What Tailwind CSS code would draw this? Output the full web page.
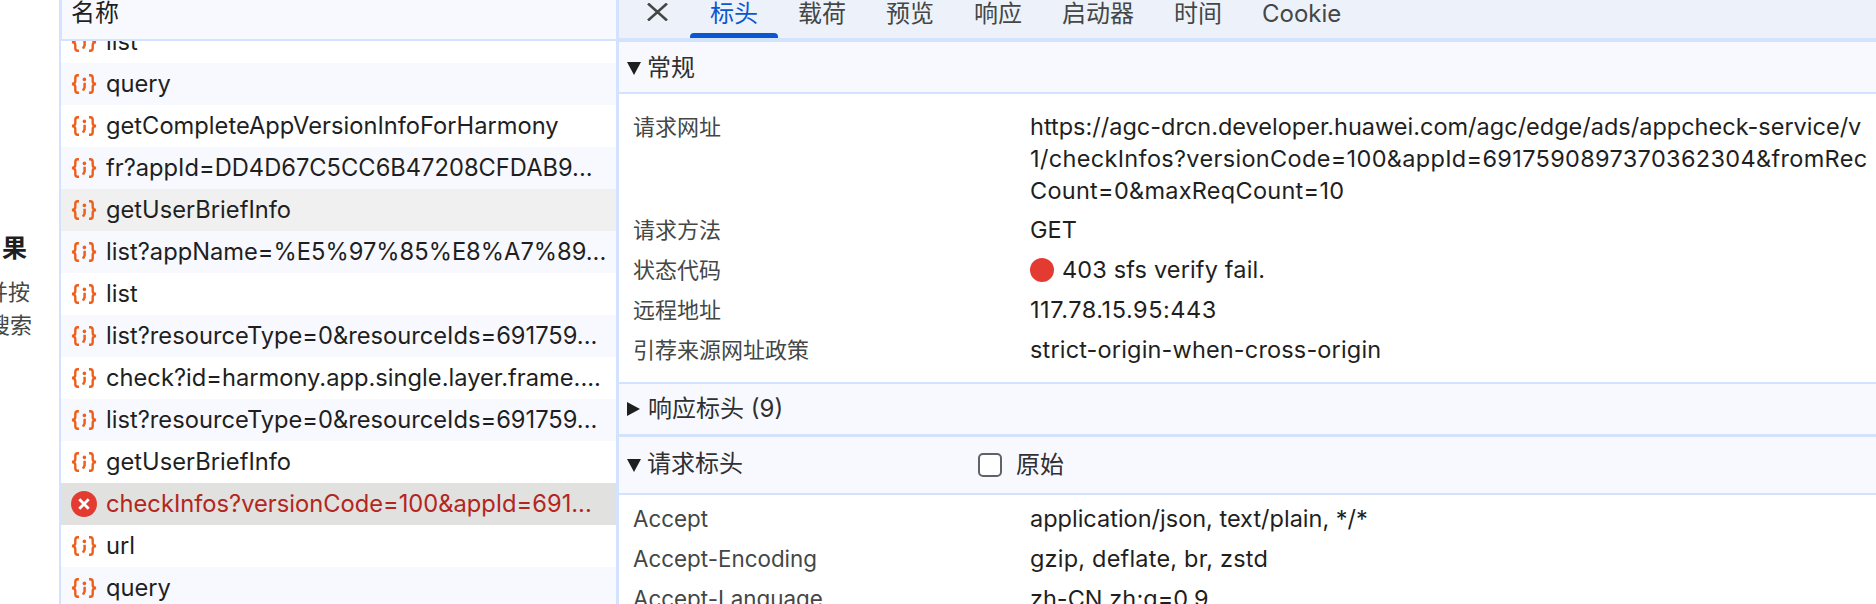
<!DOCTYPE html>
<html lang="zh-CN">
<head>
<meta charset="utf-8">
<script src="https://cdn.jsdelivr.net/npm/@tailwindcss/browser@4"></script>
<title>Network</title>
</head>
<body class="bg-white overflow-hidden">
<svg width="0" height="0" class="absolute">
  <defs>
    <symbol id="j" viewBox="0 0 26 20">
      <path d="M8 1.2H6.6C4.8 1.2 4.3 2.2 4.3 4V7C4.3 8.8 3.4 9.8 1 10C3.4 10.2 4.3 11.2 4.3 13V16C4.3 17.8 4.8 18.8 6.6 18.8H8" fill="none" stroke="#ee5f1b" stroke-width="2.4"/>
      <path d="M18 1.2H19.4C21.2 1.2 21.7 2.2 21.7 4V7C21.7 8.8 22.6 9.8 25 10C22.6 10.2 21.7 11.2 21.7 13V16C21.7 17.8 21.2 18.8 19.4 18.8H18" fill="none" stroke="#ee5f1b" stroke-width="2.4"/>
      <circle cx="13.4" cy="5.4" r="1.8" fill="#ee5f1b"/>
      <path d="M13.6 8.8V13.5L12 16.6" fill="none" stroke="#ee5f1b" stroke-width="2.5"/>
    </symbol>
  </defs>
</svg>
<div class="flex w-[1876px] h-[604px] overflow-hidden relative text-[#1f1f1f] font-['Inter','Noto_Sans_CJK_SC',sans-serif]">
  <!-- clipped left strip -->
  <div class="w-[59px] shrink-0 flex flex-col items-end pt-[233px] text-[22px] text-[#444746] whitespace-nowrap overflow-hidden">
    <div class="h-[36px] leading-[30px] text-[25px] font-bold text-[#1f1f1f] pr-[32px]">果</div>
    <div class="h-[36px] leading-[46px] pr-[29px]">刷新并按</div>
    <div class="h-[35px] leading-[40px] pr-[27px]">开始搜索</div>
  </div>

  <!-- request list -->
  <div class="w-[557px] shrink-0 h-full flex flex-col border-l-2 border-[#d3e3fd] overflow-hidden text-[23.7px]">
    <div class="h-[40.5px] shrink-0 bg-[#f8f9ff] border-b-2 border-l-2 -ml-px border-[#d3e3fd] pl-[9px] text-[24px] leading-[26px] relative z-10">名称</div>
    <div class="-mt-[20px] flex flex-col">
      <div class="h-[42px] flex items-center pl-[10px] gap-[9px] bg-white"><svg class="w-[26px] h-[20px] shrink-0"><use href="#j"/></svg><span>list</span></div>
      <div class="h-[42px] flex items-center pl-[10px] gap-[9px] bg-[#f8f9fe]"><svg class="w-[26px] h-[20px] shrink-0"><use href="#j"/></svg><span>query</span></div>
      <div class="h-[42px] flex items-center pl-[10px] gap-[9px] bg-white"><svg class="w-[26px] h-[20px] shrink-0"><use href="#j"/></svg><span>getCompleteAppVersionInfoForHarmony</span></div>
      <div class="h-[42px] flex items-center pl-[10px] gap-[9px] bg-[#f8f9fe]"><svg class="w-[26px] h-[20px] shrink-0"><use href="#j"/></svg><span>fr?appId=DD4D67C5CC6B47208CFDAB9...</span></div>
      <div class="h-[42px] flex items-center pl-[10px] gap-[9px] bg-[#f0f0f0]"><svg class="w-[26px] h-[20px] shrink-0"><use href="#j"/></svg><span>getUserBriefInfo</span></div>
      <div class="h-[42px] flex items-center pl-[10px] gap-[9px] bg-[#f8f9fe]"><svg class="w-[26px] h-[20px] shrink-0"><use href="#j"/></svg><span>list?appName=%E5%97%85%E8%A7%89...</span></div>
      <div class="h-[42px] flex items-center pl-[10px] gap-[9px] bg-white"><svg class="w-[26px] h-[20px] shrink-0"><use href="#j"/></svg><span>list</span></div>
      <div class="h-[42px] flex items-center pl-[10px] gap-[9px] bg-[#f8f9fe]"><svg class="w-[26px] h-[20px] shrink-0"><use href="#j"/></svg><span>list?resourceType=0&amp;resourceIds=691759...</span></div>
      <div class="h-[42px] flex items-center pl-[10px] gap-[9px] bg-white"><svg class="w-[26px] h-[20px] shrink-0"><use href="#j"/></svg><span>check?id=harmony.app.single.layer.frame....</span></div>
      <div class="h-[42px] flex items-center pl-[10px] gap-[9px] bg-[#f8f9fe]"><svg class="w-[26px] h-[20px] shrink-0"><use href="#j"/></svg><span>list?resourceType=0&amp;resourceIds=691759...</span></div>
      <div class="h-[42px] flex items-center pl-[10px] gap-[9px] bg-white"><svg class="w-[26px] h-[20px] shrink-0"><use href="#j"/></svg><span>getUserBriefInfo</span></div>
      <div class="h-[42px] flex items-center pl-[10px] gap-[9px] bg-[#e1e1df] text-[#b3261e]">
        <svg class="w-[26px] h-[26px] shrink-0" viewBox="0 0 26 26"><circle cx="13" cy="13" r="13" fill="#e33b32"/><path d="M8.3 8.3L17.7 17.7M17.7 8.3L8.3 17.7" stroke="#fff" stroke-width="2.8"/></svg>
        <span>checkInfos?versionCode=100&amp;appId=691...</span>
      </div>
      <div class="h-[42px] flex items-center pl-[10px] gap-[9px] bg-white"><svg class="w-[26px] h-[20px] shrink-0"><use href="#j"/></svg><span>url</span></div>
      <div class="h-[42px] flex items-center pl-[10px] gap-[9px] bg-[#f8f9fe]"><svg class="w-[26px] h-[20px] shrink-0"><use href="#j"/></svg><span>query</span></div>
    </div>
  </div>

  <!-- details -->
  <div class="flex-1 min-w-0 h-full flex flex-col border-l-[3px] border-[#d3e3fd] text-[22.4px] overflow-hidden">
    <div class="h-[42px] shrink-0 bg-[#edf2fa] border-b-4 border-[#d3e3fd] flex items-start text-[24px] text-[#444746]">
      <svg class="w-[21px] h-[18px] ml-[28px] mr-[22px] mt-[3px] shrink-0" viewBox="0 0 21 18"><path d="M1 0.5L20 17.5M20 0.5L1 17.5" stroke="#444746" stroke-width="2.6"/></svg>
      <div class="relative h-[38px] w-[88px] text-center leading-[28px] text-[#0b57d0]">标头<div class="absolute left-0 right-0 bottom-0 h-[5px] bg-[#0b57d0] rounded-t-[4px]"></div></div>
      <div class="h-[38px] w-[88px] text-center leading-[28px]">载荷</div>
      <div class="h-[38px] w-[88px] text-center leading-[28px]">预览</div>
      <div class="h-[38px] w-[88px] text-center leading-[28px]">响应</div>
      <div class="h-[38px] w-[112px] text-center leading-[28px]">启动器</div>
      <div class="h-[38px] w-[88px] text-center leading-[28px]">时间</div>
      <div class="h-[38px] px-[20px] leading-[28px]">Cookie</div>
    </div>

    <div class="h-[52px] shrink-0 bg-[#f8f9ff] border-b-2 border-[#d3e3fd] flex items-center pl-[8px] text-[24px] text-[#303030]">
      <span class="w-0 h-0 border-x-[7.5px] border-x-transparent border-t-[13px] border-t-[#1f1f1f] mr-[6px] mt-[2px]"></span><span class="leading-[48px] mt-[1px]">常规</span>
    </div>
    <div class="h-[290px] shrink-0 pt-[16.5px] pl-[14px] flex flex-col gap-[7.8px] border-b-2 border-[#d3e3fd]">
      <div class="flex leading-[32px]"><div class="w-[397px] shrink-0 text-[#444746] text-[22px]">请求网址</div><div class="whitespace-nowrap text-[23.5px]"><div>https://agc-drcn.developer.huawei.com/agc/edge/ads/appcheck-service/v</div><div class="tracking-[0.33px]">1/checkInfos?versionCode=100&amp;appId=6917590897370362304&amp;fromRec</div><div class="tracking-[0.27px]">Count=0&amp;maxReqCount=10</div></div></div>
      <div class="flex leading-[32px]"><div class="w-[397px] shrink-0 text-[#444746] text-[22px]">请求方法</div><div class="text-[23.5px]">GET</div></div>
      <div class="flex leading-[32px]"><div class="w-[397px] shrink-0 text-[#444746] text-[22px]">状态代码</div><div class="flex items-center gap-[8px] text-[23.5px] tracking-[0.15px]"><span class="w-[24px] h-[24px] rounded-full bg-[#e33b32]"></span>403 sfs verify fail.</div></div>
      <div class="flex leading-[32px]"><div class="w-[397px] shrink-0 text-[#444746] text-[22px]">远程地址</div><div class="text-[23.5px] tracking-[0.56px]">117.78.15.95:443</div></div>
      <div class="flex leading-[32px]"><div class="w-[397px] shrink-0 text-[#444746] text-[22px]">引荐来源网址政策</div><div class="text-[23.5px] tracking-[0.16px]">strict-origin-when-cross-origin</div></div>
    </div>

    <div class="h-[53px] shrink-0 bg-[#f8f9ff] border-b-[3px] border-[#d3e3fd] flex items-center pl-[8px] text-[24px] text-[#303030]">
      <span class="w-0 h-0 border-y-[7.5px] border-y-transparent border-l-[13px] border-l-[#1f1f1f] mr-[8px]"></span><span>响应标头 (9)</span>
    </div>
    <div class="h-[58px] shrink-0 bg-[#f8f9ff] border-b-2 border-[#d3e3fd] flex items-center pl-[8px] text-[24px] text-[#303030]">
      <span class="w-0 h-0 border-x-[7.5px] border-x-transparent border-t-[13px] border-t-[#1f1f1f] mr-[6px]"></span><span class="w-[331px] -mt-[2px]">请求标头</span>
      <span class="w-[24px] h-[24px] rounded-[5px] border-2 border-[#5f6368] bg-white mr-[14px] shrink-0"></span><span>原始</span>
    </div>
    <div class="pt-[8px] pl-[14px] flex flex-col gap-[8px]">
      <div class="flex leading-[32px]"><div class="w-[397px] shrink-0 text-[#444746]">Accept</div><div class="text-[23.5px]">application/json, text/plain, */*</div></div>
      <div class="flex leading-[32px]"><div class="w-[397px] shrink-0 text-[#444746]">Accept-Encoding</div><div class="text-[23.5px] tracking-[0.2px]">gzip, deflate, br, zstd</div></div>
      <div class="flex leading-[32px]"><div class="w-[397px] shrink-0 text-[#444746]">Accept-Language</div><div class="text-[23.5px]">zh-CN,zh;q=0.9</div></div>
    </div>
  </div>

  <!-- faint watermark laid over the page -->
  <div class="absolute inset-0 overflow-hidden pointer-events-none text-[30px] leading-[44px] text-black/[0.018] whitespace-nowrap font-['Liberation_Sans',sans-serif]">
    <div class="absolute left-[-90px] top-[-44px] -rotate-[39deg]">5F421DCC55F251B389B76E98D2A977A<br>5F421DCC55F251B389B76E98D2A977A</div>
    <div class="absolute left-[10px] top-[136px] -rotate-[39deg]">5F421DCC55F251B389B76E98D2A977A<br>5F421DCC55F251B389B76E98D2A977A</div>
    <div class="absolute left-[110px] top-[316px] -rotate-[39deg]">5F421DCC55F251B389B76E98D2A977A<br>5F421DCC55F251B389B76E98D2A977A</div>
    <div class="absolute left-[210px] top-[496px] -rotate-[39deg]">5F421DCC55F251B389B76E98D2A977A<br>5F421DCC55F251B389B76E98D2A977A</div>
    <div class="absolute left-[650px] top-[116px] -rotate-[39deg]">5F421DCC55F251B389B76E98D2A977A<br>5F421DCC55F251B389B76E98D2A977A</div>
    <div class="absolute left-[750px] top-[296px] -rotate-[39deg]">5F421DCC55F251B389B76E98D2A977A<br>5F421DCC55F251B389B76E98D2A977A</div>
    <div class="absolute left-[850px] top-[476px] -rotate-[39deg]">5F421DCC55F251B389B76E98D2A977A<br>5F421DCC55F251B389B76E98D2A977A</div>
    <div class="absolute left-[1290px] top-[96px] -rotate-[39deg]">5F421DCC55F251B389B76E98D2A977A<br>5F421DCC55F251B389B76E98D2A977A</div>
    <div class="absolute left-[1390px] top-[276px] -rotate-[39deg]">5F421DCC55F251B389B76E98D2A977A<br>5F421DCC55F251B389B76E98D2A977A</div>
    <div class="absolute left-[1490px] top-[456px] -rotate-[39deg]">5F421DCC55F251B389B76E98D2A977A<br>5F421DCC55F251B389B76E98D2A977A</div>
  </div>
</div>
</body>
</html>
